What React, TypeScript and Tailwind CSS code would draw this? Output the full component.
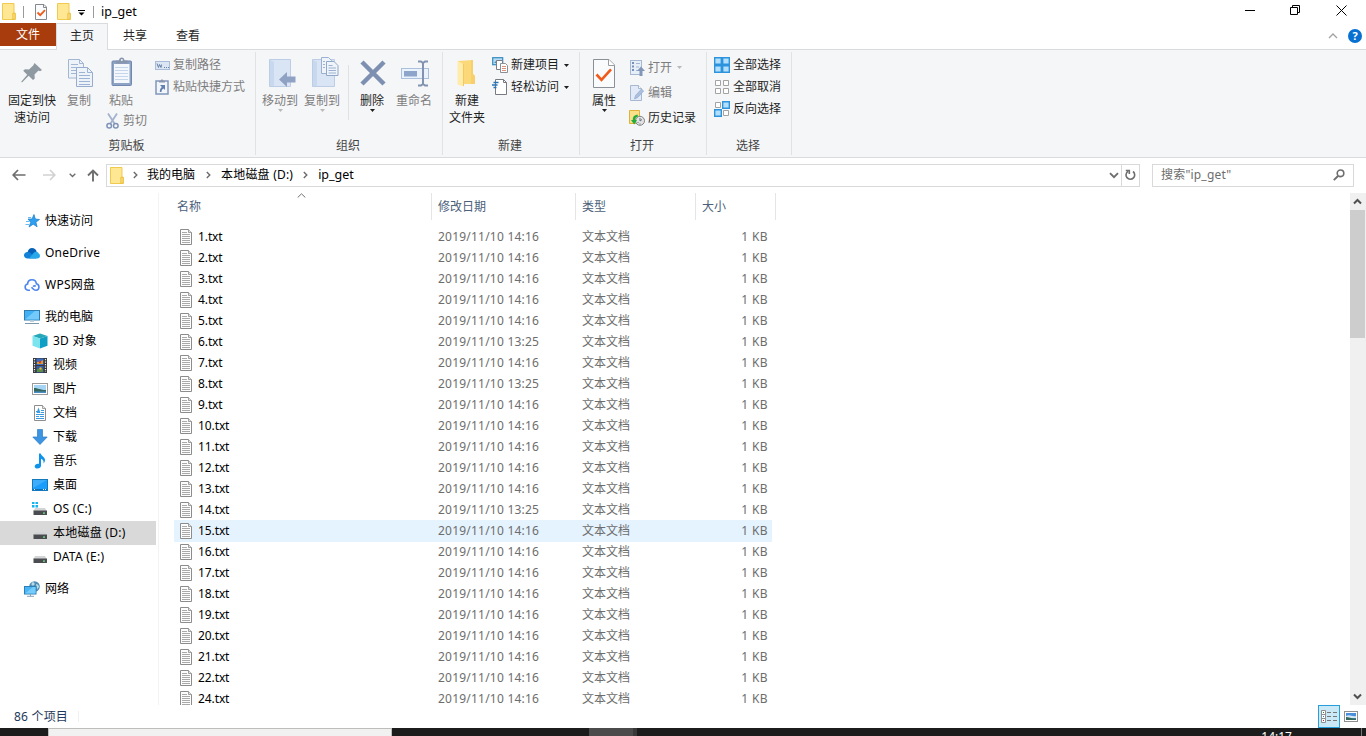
import type { ReactNode } from "react"

interface FileRow {
  name: string
  date: string
}

interface NavItem {
  label: string
  icon: ReactNode
  child?: boolean
  active?: boolean
}

const OLDER = [6, 8, 14]

const files: FileRow[] = [
  1, 2, 3, 4, 5, 6, 7, 8, 9, 10, 11, 12, 13, 14, 15, 16, 17, 18, 19, 20, 21, 22, 24,
].map((n) => ({
  name: `${n}.txt`,
  date: OLDER.includes(n) ? "2019/11/10 13:25" : "2019/11/10 14:16",
}))

/* ---------- small icons ---------- */

function FolderIcon({ className = "" }: { className?: string }) {
  return (
    <svg width="14" height="17" viewBox="0 0 14 17" className={className}>
      <path d="M.5.5H12v9.8h1.2v6.2H.5z" fill="#ffe794" stroke="#f0c94f" />
      <path d="M10.8 16.3v-6h2.4v6z" fill="#fbdc78" stroke="#e9bb36" strokeWidth=".8" />
    </svg>
  )
}

function Caret({ className = "text-[#1e1e1e]" }: { className?: string }) {
  return (
    <svg width="5" height="3" viewBox="0 0 5 3" className={className}>
      <path d="M0 0h5L2.500 3z" fill="currentColor" />
    </svg>
  )
}

function Crumb() {
  return (
    <svg width="5" height="8" viewBox="0 0 5 8">
      <path d="M.8 1l3 3-3 3" fill="none" stroke="#6b6b6b" strokeWidth="1.400" />
    </svg>
  )
}

function Drive({ windows = false }: { windows?: boolean }) {
  return (
    <svg width="16" height="16" viewBox="0 0 16 16">
      <path d="M3 7h10l2 3.500H1.500z" fill="#d3d4d6" />
      <rect x="1.500" y="9.500" width="13.500" height="4.500" rx=".6" fill="#4a4c4f" />
      <path d="M1.500 9.500H15" stroke="#8f9194" strokeWidth=".8" />
      <rect x="11" y="11.500" width="2" height="1.200" fill="#6ff08a" />
      {windows && (
        <g>
          <rect x="0" y="0" width="7" height="7" fill="#fff" />
          <path d="M0 1h2.500v2H0zM3.500 1H6v2H3.500zM0 4h2.500v2.500H0zM3.500 4H6v2.500H3.500z" fill="#12b4f0" />
        </g>
      )}
    </svg>
  )
}

function TextFileIcon() {
  return (
    <svg width="12" height="16" viewBox="0 0 12 16" className="mb-px">
      <path d="M.5.5h8l3 3v12H.5z" fill="#fdfdfd" stroke="#8c8c8c" />
      <path d="M8.500.5v3h3" fill="#e4e4e4" stroke="#8c8c8c" strokeWidth=".8" />
      <path d="M2 3.500h5M2 5.500h8M2 7.500h8M2 9.500h8M2 11.500h8M2 13.500h8" stroke="#a9a9a9" />
    </svg>
  )
}

function Monitor() {
  return (
    <svg width="16" height="16" viewBox="0 0 16 16">
      <rect x=".5" y="1.500" width="15" height="9.500" fill="#42b0f5" stroke="#2f7caf" />
      <path d="M1 10.500L11 2h4v8.500z" fill="#74cbfb" />
      <path d="M6 11.500h4v1.500H6z" fill="#c6d3dc" />
      <path d="M1 14.500h14" stroke="#7c98ad" />
    </svg>
  )
}

const navItems: NavItem[] = [
  {
    label: "快速访问",
    icon: (
      <svg width="16" height="16" viewBox="0 0 16 16">
        <path d="M10 1.500l1.300 4.500 4.200.5-3.600 2.700 1.200 4.600-3.900-2.600-4.200 2.800 1.700-4.700L4 6h4z" fill="#2e9ff0" stroke="#1a7dc9" strokeWidth=".7" />
        <path d="M4 4.500h3M2 8.500h3.500M1.500 11.500h3.500" stroke="#62bdf5" />
      </svg>
    ),
  },
  {
    label: "OneDrive",
    icon: (
      <svg width="16" height="16" viewBox="0 0 16 16">
        <path d="M3.500 7.500C4 4.300 6 3 8 3c2.300 0 4 1.300 4.600 3.500L9 12z" fill="#0861b8" />
        <path d="M3.500 13.500C1.400 13.500 0 12 0 10.300 0 8.400 1.600 7 3.500 7c1.300 0 2 .4 3 1l6 5.500z" fill="#1281d8" />
        <path d="M5 13.500l5-6c1-.9 4-1.300 4.700 1 1 .6 1.300 1.500 1.300 2.500 0 1.500-1 2.500-2.600 2.500z" fill="#28a8ea" />
      </svg>
    ),
  },
  {
    label: "WPS网盘",
    icon: (
      <svg width="16" height="16" viewBox="0 0 16 16">
        <path d="M6 13.300H4A3.200 3.200 0 0 1 3.600 7C3.700 4.300 5.400 2.700 8 2.700s4.200 1.700 4.400 4.100A3.300 3.300 0 0 1 12 13.300c-1.500 0-2.400-.8-3.300-1.800L7.500 10.200M9 9.500c1-.8 2-.8 2.800-.3" fill="none" stroke="#4a86ee" strokeWidth="1.600" />
      </svg>
    ),
  },
  { label: "我的电脑", icon: <Monitor /> },
  {
    label: "3D 对象",
    child: true,
    icon: (
      <svg width="16" height="16" viewBox="0 0 16 16">
        <path d="M8 .5L15.500 3 8 5.500.5 3z" fill="#27a8b8" />
        <path d="M.5 3L8 5.500v10L.5 12.800z" fill="#7ce4ee" />
        <path d="M15.500 3L8 5.500v10l7.500-2.700z" fill="#109fc4" />
      </svg>
    ),
  },
  {
    label: "视频",
    child: true,
    icon: (
      <svg width="16" height="16" viewBox="0 0 16 16">
        <rect x="1" y="1" width="14" height="15" fill="#37383c" />
        <path d="M2.500 2v13M13.500 2v13" stroke="#f1f1f1" strokeWidth="1.200" strokeDasharray="1.300 1.200" />
        <rect x="4.500" y="1.500" width="7" height="6.500" fill="#3c6fc4" />
        <rect x="4.500" y="9" width="7" height="6.500" fill="#365ea8" />
        <path d="M5 5h3l3-2v4H5z" fill="#df9b35" />
        <path d="M5 12h6v3H5z" fill="#5c8d46" />
        <circle cx="8" cy="5" r="1.200" fill="#d33c31" />
        <circle cx="8.500" cy="11.500" r="1.200" fill="#e2b62e" />
      </svg>
    ),
  },
  {
    label: "图片",
    child: true,
    icon: (
      <svg width="16" height="16" viewBox="0 0 16 16">
        <rect x=".5" y="2.500" width="15" height="11" fill="#fff" stroke="#9a9a9a" />
        <rect x="2" y="4" width="12" height="8" fill="#a6d4f5" />
        <path d="M2 7c4 0 6 2 12 2v3H2z" fill="#36675c" />
        <path d="M2 10.500h12V12H2z" fill="#4a8ec6" />
      </svg>
    ),
  },
  {
    label: "文档",
    child: true,
    icon: (
      <svg width="16" height="16" viewBox="0 0 16 16">
        <path d="M2.500.5h8l3 3v12h-11z" fill="#fff" stroke="#8d8d8d" />
        <path d="M10.500.5v3h3" fill="#e7e7e7" stroke="#8d8d8d" strokeWidth=".8" />
        <path d="M4 6.500h2M9 5.500h3M9 7.500h3M4 9.500h8M4 11.500h3M8 11.500h4M4 13.500h8" stroke="#3a9be0" />
        <path d="M4.500 8l2-5.500L8.500 8z" fill="#3a9be0" />
      </svg>
    ),
  },
  {
    label: "下载",
    child: true,
    icon: (
      <svg width="16" height="16" viewBox="0 0 16 16">
        <path d="M5.500.5h5v7.500h4.700L8 15.500.8 8h4.700z" fill="#3c94e2" stroke="#2d7bc2" strokeWidth=".7" />
      </svg>
    ),
  },
  {
    label: "音乐",
    child: true,
    icon: (
      <svg width="16" height="16" viewBox="0 0 16 16">
        <path d="M7 .5h1.700c.3 2.300 4.300 3.300 4.300 6.500 0 1.500-.7 2.700-1.500 3.500.5-2.500-.5-4-2.500-4.700v7c0 1.600-1.500 2.700-3.500 2.700-1.700 0-2.800-.9-2.800-2.100 0-1.500 1.500-2.700 3.300-2.700H7z" fill="#0d93ea" />
      </svg>
    ),
  },
  {
    label: "桌面",
    child: true,
    icon: (
      <svg width="16" height="16" viewBox="0 0 16 16">
        <rect x=".5" y="2.500" width="15" height="11" fill="#1a9dfb" stroke="#1679bd" />
        <path d="M1 3h14L1 11z" fill="#3eaefc" />
        <path d="M1 12.500h14" stroke="#0b6eb9" />
        <path d="M2 12.500h1M11 12.500h1M13 12.500h1" stroke="#e5f5ff" />
      </svg>
    ),
  },
  { label: "OS (C:)", child: true, icon: <Drive windows /> },
  { label: "本地磁盘 (D:)", child: true, active: true, icon: <Drive /> },
  { label: "DATA (E:)", child: true, icon: <Drive /> },
  {
    label: "网络",
    icon: (
      <svg width="16" height="16" viewBox="0 0 16 16">
        <circle cx="10.500" cy="5.500" r="5.300" fill="#4f8db3" />
        <path d="M8 1.500c2-1 3 .5 2.500 2S7 5 7.500 3zM12 3c2 0 3 2 3 3l-2 2.500z" fill="#b9dcec" />
        <rect x=".5" y="5.500" width="11.500" height="7.500" fill="#4ab4f5" stroke="#2b80b5" />
        <path d="M1 12.500L9 6h2.500v6.500z" fill="#75ccfb" />
        <path d="M3 15.300h7M6.500 13v2" stroke="#86a3b5" />
      </svg>
    ),
  },
]

/* ---------- ribbon ---------- */

interface BigButtonProps {
  icon: ReactNode
  lines: string[]
  className: string
  disabled?: boolean
  caret?: boolean
}

function BigButton({ icon, lines, className, disabled, caret }: BigButtonProps) {
  return (
    <div className={`flex shrink-0 flex-col items-center pt-[2px] ${disabled ? "text-[#7d7d7d]" : "text-[#1e1e1e]"} ${className}`}>
      <div className="flex h-[34px] items-center justify-center">{icon}</div>
      <div className="mt-[2px] text-center leading-[17px] whitespace-nowrap">
        {lines.map((line) => (
          <div key={line}>{line}</div>
        ))}
      </div>
      {caret && <Caret className={disabled ? "text-[#b9b9b9]" : "text-[#1e1e1e]"} />}
    </div>
  )
}

interface SmallButtonProps {
  icon: ReactNode
  label: string
  disabled?: boolean
  caret?: boolean
  className?: string
}

function SmallButton({ icon, label, disabled, caret, className = "h-[22px]" }: SmallButtonProps) {
  return (
    <div className={`flex items-center whitespace-nowrap ${disabled ? "text-[#7d7d7d]" : "text-[#1e1e1e]"} ${className}`}>
      <span className="mr-[3px] flex w-4 justify-center">{icon}</span>
      {label}
      {caret && <span className="ml-[5px]"><Caret className={disabled ? "text-[#b9b9b9]" : "text-[#1e1e1e]"} /></span>}
    </div>
  )
}

function Group({ title, className, children }: { title: string; className: string; children: ReactNode }) {
  return (
    <div className={`mt-[2px] flex h-[103px] shrink-0 flex-col border-r border-[#e0e2e4] ${className}`}>
      <div className="flex h-[84px] pt-[2px]">{children}</div>
      <div className="pr-[2px] text-center leading-[19px] text-[#444]">{title}</div>
    </div>
  )
}

function Ribbon() {
  return (
    <div className="flex h-[108px] border-b border-[#dadbdc] bg-[#f5f6f8]">
      <Group title="剪贴板" className="w-64">
        <BigButton
          className="ml-2 w-12"
          lines={["固定到快", "速访问"]}
          icon={
            <svg width="22" height="22" viewBox="0 0 22 22">
              <path d="M13.500 1l7.500 7-2 1.200-1.500-.6-4 4 .3 3.900-1.800 1.500-4.300-4.300L1 20.500l-.8-.7 6-7-4-4 1.800-1.600 4 .2 4.200-4z" fill="#8f99a2" />
            </svg>
          }
        />
        <BigButton
          className="ml-[5px] w-9"
          disabled
          lines={["复制"]}
          icon={
            <svg width="25" height="28" viewBox="0 0 25 28" className="ml-[2px]">
              <path d="M.5.500h11l4 4V19H.500z" fill="#eef3f9" stroke="#a3b6d2" />
              <path d="M11.500.500v4h4M3 5.500h7M3 8.500h9M3 11.500h5M3 14.500h5" fill="none" stroke="#a3b6d2" />
              <path d="M8.500 8.500h11l5 5v14h-16z" fill="#eef3f9" stroke="#98adcd" />
              <path d="M19.500 8.500v5h5M11 13.500h6M11 16.500h11M11 19.500h11M11 22.500h11M11 25.500h11" fill="none" stroke="#9db3d3" />
            </svg>
          }
        />
        <div className="ml-[5px] w-[45px]">
          <BigButton
            className="w-[38px]"
            disabled
            lines={["粘贴"]}
            icon={
              <svg width="22" height="30" viewBox="0 0 22 30" className="mb-[2px] ml-[2px]">
                <rect x="1" y="4" width="19.500" height="24.500" rx="1" fill="#8da2c4" stroke="#7188af" />
                <rect x="3" y="7" width="15.500" height="19" fill="#f4f8fc" />
                <path d="M4 10.500h13M4 13.500h13M4 16.500h13M4 19.500h13M4 22.500h13" stroke="#c5d6ea" />
                <path d="M5 6.500V3.500h3c0-4 5.500-4 5.500 0h3v3z" fill="#8795ad" />
                <circle cx="10.800" cy="3" r="1" fill="#eef3f8" />
              </svg>
            }
          />
          <SmallButton
            disabled
            label="剪切"
            className="mt-[2px] ml-1 h-5"
            icon={
              <svg width="13" height="16" viewBox="0 0 13 16">
                <path d="M2 .5l6.500 10M11 .5L4.500 10.500" stroke="#a3b2cd" strokeWidth="1.800" />
                <circle cx="3.200" cy="12.800" r="2.300" fill="none" stroke="#7f93b6" strokeWidth="1.500" />
                <circle cx="9.800" cy="12.800" r="2.300" fill="none" stroke="#7f93b6" strokeWidth="1.500" />
              </svg>
            }
          />
        </div>
        <div className="ml-[7px]">
          <SmallButton
            disabled
            label="复制路径"
            icon={
              <svg width="15" height="9" viewBox="0 0 15 9">
                <rect x=".5" y=".5" width="14" height="8" fill="#dce6f3" stroke="#a9bdd8" />
                <path d="M2 2.500l1.500 4 1-3 1.500 3 .5-3M9 6.500h1M11 6.500h1M13 6.500h1" fill="none" stroke="#6680ad" />
              </svg>
            }
          />
          <SmallButton
            disabled
            label="粘贴快捷方式"
            icon={
              <svg width="14" height="16" viewBox="0 0 14 16">
                <rect x="1" y="2" width="12" height="13" fill="#f2f6fb" stroke="#8196ba" strokeWidth="1.500" />
                <path d="M4 3.500V2h1.500c0-2 3-2 3 0H10v1.500z" fill="#8795ad" />
                <path d="M5 6h5v5L8.500 9.500c-1.500 1-2 2-2 3.500H4.800c0-2.500.7-3.700 2-5z" fill="#6280b0" />
              </svg>
            }
          />
        </div>
      </Group>

      <Group title="组织" className="w-[187px]">
        <BigButton
          className="ml-[3px] w-[42px]"
          disabled
          caret
          lines={["移动到"]}
          icon={
            <svg width="27" height="30" viewBox="0 0 27 30" className="ml-[5px]">
              <path d="M.5 1.500h21v27H.500z" fill="#d9e5f5" stroke="#bccde5" />
              <path d="M1 2l4 2v24H1z" fill="#c8d8ee" />
              <path d="M10 21.500l8-7.500v4.500h8.500v6H18V29z" fill="#8fa2c3" />
            </svg>
          }
        />
        <BigButton
          className="w-[42px]"
          disabled
          caret
          lines={["复制到"]}
          icon={
            <svg width="27" height="31" viewBox="0 0 27 31" className="mb-px ml-[7px]">
              <path d="M.5 2.500h22v27H.500z" fill="#d9e5f5" stroke="#bccde5" />
              <path d="M1 3l4 2v24H1z" fill="#c8d8ee" />
              <path d="M9.500.5h7l3 3v13h-10z" fill="#eff4fa" stroke="#9cb1cf" />
              <path d="M14.500 4.500h7.500l4 4v10H14.500z" fill="#eff4fa" stroke="#91a8ca" />
              <path d="M11 4.500h2M11 7.500h2M11 10.500h2M16.500 8.500h4M16.500 11h7.500M16.500 13.500h7.500M16.500 16h7.500" stroke="#9db2d1" />
            </svg>
          }
        />
        <div className="mt-[11px] ml-[5px] h-[55px] w-px bg-[#dfe1e3]" />
        <BigButton
          className="ml-[3px] w-10"
          caret
          lines={["删除"]}
          icon={
            <svg width="26" height="26" viewBox="0 0 26 26" className="ml-[2px]">
              <path d="M2 2l22 22M24 2L2 24" stroke="#7d90b2" strokeWidth="4.500" />
            </svg>
          }
        />
        <BigButton
          className="ml-px w-[42px]"
          disabled
          lines={["重命名"]}
          icon={
            <svg width="28" height="27" viewBox="0 0 28 27" className="ml-[2px]">
              <rect x=".5" y="8.500" width="27" height="10" fill="#eaf2fb" stroke="#abc0dc" />
              <rect x="3" y="11" width="13" height="5.500" fill="#8ea5cb" />
              <path d="M22 2v23M17 1.500h3l2 1.500 2-1.500h3M17 25.500h3l2-1.500 2 1.500h3" fill="none" stroke="#8293b0" strokeWidth="2" />
            </svg>
          }
        />
      </Group>

      <Group title="新建" className="w-[137px]">
        <BigButton
          className="ml-1 w-10"
          lines={["新建", "文件夹"]}
          icon={
            <svg width="19" height="28" viewBox="0 0 19 28" className="mr-px">
              <path d="M1 2l15-1v14l2 2v8H6z" fill="#fbd878" />
              <path d="M.500 2l6 3v22.500l-6-2z" fill="#ffecab" />
              <path d="M6.500 5v22" stroke="#f2ca62" />
              <path d="M14 1h2v14l2 2v8h-4z" fill="#f7cf6b" />
            </svg>
          }
        />
        <div className="ml-[5px]">
          <SmallButton
            caret
            label="新建项目"
            icon={
              <svg width="16" height="16" viewBox="0 0 16 16">
                <rect x=".7" y=".7" width="10" height="7" fill="#b6dcf5" stroke="#378abe" strokeWidth="1.200" />
                <path d="M2 6l3-3 3 3z" fill="#4792aa" />
                <path d="M4.500 3.500h6v9h-6z" fill="#fff" stroke="#7b7f85" />
                <path d="M8.500 6.500h5l2 2v7h-7z" fill="#fff" stroke="#8b8f96" />
                <path d="M10 9.500h4M10 11.500h4M10 13.500h4" stroke="#dc927a" />
              </svg>
            }
          />
          <SmallButton
            caret
            label="轻松访问"
            icon={
              <svg width="16" height="16" viewBox="0 0 16 16">
                <path d="M3.500.5h8l3 3v12h-11z" fill="#fff" stroke="#777b80" />
                <path d="M11.500.5v3h3" fill="none" stroke="#777b80" />
                <path d="M1.500 3.500h5M0 6h5.500M1.500 8.500h3" stroke="#2374b8" strokeWidth="1.300" />
              </svg>
            }
          />
        </div>
      </Group>

      <Group title="打开" className="w-[127px]">
        <BigButton
          className="ml-1 w-10"
          caret
          lines={["属性"]}
          icon={
            <svg width="22" height="29" viewBox="0 0 22 29">
              <path d="M.5.5h15.500l5.500 5.500v22.500H.5z" fill="#fafbfc" stroke="#8b8f96" />
              <path d="M15.500 .5v6h6" fill="#fff" stroke="#9a9da3" />
              <path d="M3.500 15.500l5 5.300 9.500-10.500" fill="none" stroke="#f05a1a" strokeWidth="2.600" />
            </svg>
          }
        />
        <div className="ml-[5px] pt-px">
          <SmallButton
            disabled
            caret
            label="打开"
            className="h-[25px]"
            icon={
              <svg width="15" height="16" viewBox="0 0 15 16">
                <rect x=".5" y=".5" width="11" height="14" fill="#e6eef7" stroke="#a7b8d1" />
                <path d="M2 3h2M2 6.500h2M2 10h2" stroke="#7690b9" strokeWidth="2" />
                <path d="M6 3.500h4M6 7h3M6 10.500h2" stroke="#a5b7d2" />
                <path d="M11 6.500l4 4.500h-2.500v5h-3v-5H7z" fill="#8296b8" />
              </svg>
            }
          />
          <SmallButton
            disabled
            label="编辑"
            className="h-[25px]"
            icon={
              <svg width="14" height="16" viewBox="0 0 14 16">
                <path d="M.5.5h8l3 3v12H.500z" fill="#e1eaf6" stroke="#a7b8d1" />
                <path d="M8.500.5v3h3" fill="#fff" stroke="#a7b8d1" />
                <path d="M4.500 14l1-3.500 6-6.500 2.200 2-6 6.500z" fill="#abc0df" stroke="#8da4c8" strokeWidth=".6" />
              </svg>
            }
          />
          <SmallButton
            label="历史记录"
            className="h-[25px]"
            icon={
              <svg width="16" height="16" viewBox="0 0 16 16">
                <path d="M.5.5h10v13H.500z" fill="#fbe08a" stroke="#e0b23c" />
                <circle cx="11" cy="10.800" r="4.500" fill="#e2e3e4" stroke="#808388" />
                <path d="M11 8v3l2-1.500M8.500 12.500h1M11 13.500v1" stroke="#6d7074" fill="none" />
                <path d="M8.500 4.500C5 5 3.500 7 3.800 10H2l3.200 4.500L8 10H6.200C6 8 7 7 9 6.500z" fill="#23ad3b" />
              </svg>
            }
          />
        </div>
      </Group>

      <Group title="选择" className="w-[85px]">
        <div className="ml-[7px]">
          <SmallButton
            label="全部选择"
            icon={
              <svg width="16" height="16" viewBox="0 0 16 16">
                <path d="M.7.7h6.600v6.600H.700zM8.700.7h6.600v6.600H8.700zM.7 8.700h6.600v6.600H.700zM8.700 8.700h6.600v6.600H8.700z" fill="#b3dffc" stroke="#2d93dc" strokeWidth="1.400" />
              </svg>
            }
          />
          <SmallButton
            label="全部取消"
            icon={
              <svg width="16" height="16" viewBox="0 0 16 16">
                <path d="M1.500 1.500h5v5h-5zM9.500 1.500h5v5h-5zM1.500 9.500h5v5h-5zM9.500 9.500h5v5h-5z" fill="#fff" stroke="#a3a3a3" />
              </svg>
            }
          />
          <SmallButton
            label="反向选择"
            icon={
              <svg width="16" height="16" viewBox="0 0 16 16">
                <path d="M1.500 1.500h5v5h-5zM9.500 9.500h5v5h-5z" fill="#fff" stroke="#a3a3a3" />
                <path d="M8.700.7h6.600v6.600H8.700zM.7 8.700h6.600v6.600H.700z" fill="#b3dffc" stroke="#2d93dc" strokeWidth="1.400" />
              </svg>
            }
          />
        </div>
      </Group>
    </div>
  )
}

/* ---------- window chrome ---------- */

function TitleBar() {
  return (
    <div className="flex h-[23px] items-center pl-[2px]">
      <FolderIcon />
      <div className="ml-[7px] h-3 w-px bg-[#9a9a9a]" />
      <svg width="12" height="16" viewBox="0 0 12 16" className="ml-[11px]">
        <path d="M.5.5h8.500l2.500 2.500v12.500H.5z" fill="#fafbfc" stroke="#85898f" />
        <path d="M8.500.5v3h3" fill="none" stroke="#85898f" />
        <path d="M2.500 8.500l2.700 2.700 4.800-5" fill="none" stroke="#f05a1a" strokeWidth="1.800" />
      </svg>
      <FolderIcon className="ml-[10px]" />
      <svg width="7" height="6" viewBox="0 0 7 6" className="mt-[3px] ml-[7px]">
        <path d="M0 .5h7" stroke="#000" />
        <path d="M.5 2.500h6L3.500 5.500z" />
      </svg>
      <div className="ml-2 h-3 w-px bg-[#9a9a9a]" />
      <span className="ml-[7px] text-[12.5px]">ip_get</span>
      <div className="mr-[19px] mb-[2px] ml-auto flex items-center gap-[35px]">
        <svg width="11" height="11" viewBox="0 0 11 11"><path d="M1 5.500h10" stroke="#000" /></svg>
        <svg width="11" height="11" viewBox="0 0 11 11">
          <path d="M.5 2.500h7v7h-7zM2.500 2.500v-2h7v7h-2" fill="none" stroke="#000" />
        </svg>
        <svg width="11" height="11" viewBox="0 0 11 11"><path d="M.5.500l10 10M10.500.500l-10 10" stroke="#000" /></svg>
      </div>
    </div>
  )
}

function Tabs() {
  return (
    <div className="flex h-[27px] border-b border-[#dadbdc] text-[#262626]">
      <div className="h-[23px] w-14 bg-[#a83c0c] text-center leading-[24px] text-white">文件</div>
      <div className="h-[27px] w-[52px] border border-b-0 border-[#dadbdc] bg-[#f5f6f8] text-center leading-6">主页</div>
      <div className="w-[54px] text-center leading-[25px]">共享</div>
      <div className="w-[52px] text-center leading-[25px]">查看</div>
      <div className="mr-1 ml-auto flex items-center gap-[10px]">
        <svg width="10" height="6" viewBox="0 0 10 6"><path d="M1 5l4-4 4 4" fill="none" stroke="#a2a2a2" strokeWidth="1.300" /></svg>
        <div className="h-[14px] w-[14px] rounded-full bg-[#0870d1] text-center text-[11px] leading-[14px] font-bold text-white">?</div>
      </div>
    </div>
  )
}

function AddressBar() {
  return (
    <div className="flex h-[35px] items-center pb-[1px] text-black">
      <svg width="14" height="12" viewBox="0 0 14 12" className="ml-3">
        <path d="M13.500 6h-12M6 1L1.200 6 6 11" fill="none" stroke="#6e6e6e" strokeWidth="1.700" />
      </svg>
      <svg width="14" height="12" viewBox="0 0 14 12" className="ml-4">
        <path d="M1 6h11.500M8 1l4.800 5L8 11" fill="none" stroke="#d2d2d2" strokeWidth="1.700" />
      </svg>
      <svg width="7" height="5" viewBox="0 0 7 5" className="ml-[13px]">
        <path d="M.7.800l2.800 2.800L6.300.8" fill="none" stroke="#6e6e6e" strokeWidth="1.400" />
      </svg>
      <svg width="12" height="13" viewBox="0 0 12 13" className="ml-[11px]">
        <path d="M6 12.500V1.500M1 6.500l5-5 5 5" fill="none" stroke="#6e6e6e" strokeWidth="1.900" />
      </svg>
      <div className="ml-[7px] flex h-[23px] w-[1034px] items-center border border-[#d9d9d9]">
        <FolderIcon className="ml-[3px]" />
        <span className="ml-[9px]"><Crumb /></span>
        <span className="ml-[9px]">我的电脑</span>
        <span className="ml-[11px]"><Crumb /></span>
        <span className="ml-[10px] tracking-[0.2px]">本地磁盘 (D:)</span>
        <span className="ml-[10px]"><Crumb /></span>
        <span className="ml-[10px] text-[12.5px]">ip_get</span>
        <svg width="10" height="7" viewBox="0 0 10 7" className="mr-[2px] ml-auto">
          <path d="M1 1.200l4 4 4-4" fill="none" stroke="#6e6e6e" strokeWidth="1.900" />
        </svg>
        <div className="flex h-full w-[18px] items-center justify-center border-l border-[#d9d9d9]">
          <svg width="11" height="12" viewBox="0 0 11 12">
            <path d="M3 2.300A4.300 4.300 0 1 0 8 2.500M.8 1.500h3.500V5" fill="none" stroke="#6e6e6e" strokeWidth="1.600" />
          </svg>
        </div>
      </div>
      <div className="ml-3 flex h-[23px] w-[202px] items-center justify-between border border-[#d9d9d9] pr-2 pl-2 text-[#6d6d6d]">
        <span className="tracking-[0.2px]">搜索"ip_get"</span>
        <svg width="12" height="12" viewBox="0 0 12 12">
          <circle cx="7.500" cy="4.300" r="3.300" fill="none" stroke="#6e6e6e" strokeWidth="1.600" />
          <path d="M5 7L.8 11.200" stroke="#6e6e6e" strokeWidth="1.900" />
        </svg>
      </div>
    </div>
  )
}

function Sidebar() {
  return (
    <div className="w-[159px] shrink-0 border-r border-[#f3f3f3] pt-2 text-black">
      {navItems.map((item) => (
        <div
          key={item.label}
          className={`mr-[2px] flex h-6 items-center whitespace-nowrap ${item.child ? "pl-8" : "mt-2 pl-6"} ${item.active ? "bg-[#d9d9d9]" : ""}`}
        >
          {item.icon}
          <span className={`ml-[5px] ${/[A-Z]/.test(item.label) ? "tracking-[0.25px]" : ""}`}>{item.label}</span>
        </div>
      ))}
    </div>
  )
}

function FileList() {
  return (
    <div className="grow overflow-hidden pl-[15px]">
      <div className="relative flex h-[27px] text-[#4c607a]">
        <div className="w-[258px] border-r border-[#e5e5e5] pl-[3px] leading-7">名称</div>
        <div className="w-36 border-r border-[#e5e5e5] pl-[6px] leading-7">修改日期</div>
        <div className="w-[120px] border-r border-[#e5e5e5] pl-[6px] leading-7">类型</div>
        <div className="w-20 border-r border-[#e5e5e5] pl-[6px] leading-7">大小</div>
        {/* ascending sort marker sits over the name column */}
        <svg width="9" height="5" viewBox="0 0 9 5" className="absolute top-0 left-[123px]">
          <path d="M.7 4.500l3.800-3.700 3.800 3.700" fill="none" stroke="#6f6f6f" />
        </svg>
      </div>
      <div className="mt-[6px]">
        {files.map((file) => (
          <div
            key={file.name}
            className={`-mb-px flex h-[22px] w-[598px] items-center text-[#6d6d6d] ${file.name === "15.txt" ? "bg-[#e5f3ff]" : ""}`}
          >
            <div className="flex w-[264px] items-center pl-[6px] text-black">
              <TextFileIcon />
              <span className="ml-[6px] tracking-[-0.1px]">{file.name}</span>
            </div>
            <div className="w-36 tracking-[0.22px]">{file.date}</div>
            <div className="w-[120px]">文本文档</div>
            <div className="grow pr-1 text-right tracking-[0.4px]">1 KB</div>
          </div>
        ))}
      </div>
    </div>
  )
}

function ScrollBar() {
  return (
    <div className="flex w-4 shrink-0 flex-col items-center bg-[#f0f0f0] pr-px">
      <div className="flex h-[17px] items-center">
        <svg width="9" height="7" viewBox="0 0 9 7"><path d="M1 5.500L4.500 2 8 5.500" fill="none" stroke="#505050" strokeWidth="2" /></svg>
      </div>
      <div className="h-32 w-[15px] bg-[#cdcdcd]" />
      <div className="mt-auto flex h-[17px] items-center">
        <svg width="9" height="7" viewBox="0 0 9 7"><path d="M1 1.500L4.500 5 8 1.500" fill="none" stroke="#505050" strokeWidth="2" /></svg>
      </div>
    </div>
  )
}

function StatusBar() {
  return (
    <div className="flex h-[23px] items-center pl-[14px] text-[#1e395b]">
      <span className="tracking-[0.2px]">86 个项目</span>
      <div className="ml-[10px] h-[11px] w-px bg-[#f0f0f0]" />
      <div className="ml-auto flex h-[23px] w-[22px] items-center justify-center border border-[#26a0da] bg-[#cbe8f6]">
        <svg width="16" height="13" viewBox="0 0 16 13">
          <path d="M.5.500h4v4h-4zM.5 4.500h4v4h-4zM.5 8.500h4v4h-4z" fill="#fff" stroke="#8f8f8f" />
          <path d="M6 2.500h4M12 2.500h4M6 6.500h4M12 6.500h4M6 10.500h4M12 10.500h4" stroke="#777" />
          <path d="M2 2.500h1" stroke="#3a7c45" />
          <path d="M2 6.500h1" stroke="#2f77d0" />
          <path d="M2 10.500h1" stroke="#c22" />
        </svg>
      </div>
      <svg width="14" height="11" viewBox="0 0 14 11" className="mr-2 ml-1">
        <rect x=".5" y=".5" width="13" height="10" fill="#fff" stroke="#8f8f8f" />
        <rect x="2" y="2" width="10" height="7" fill="#4b8edb" />
        <path d="M2 5c4-2 6 1 10 0v2H2z" fill="#d5e8f4" />
        <path d="M2 6c3 0 6 2 10 1.500V9H2z" fill="#376a5b" />
      </svg>
    </div>
  )
}

function TaskBar() {
  return (
    <div className="flex h-2 overflow-hidden bg-[#1c1c1c] pl-12">
      <div className="w-[344px] border border-b-0 border-[#bdbdba] bg-[#f1f1f1]" />
      <div className="ml-[197px] w-11 bg-[#4b4b4b]" />
      <div className="w-1 bg-[#393939]" />
      <span className="mt-[3px] ml-auto text-[12px] leading-3 text-white">14:17</span>
      <div className="mr-1 ml-[69px] w-px bg-[#777]" />
    </div>
  )
}

function App() {
  return (
    <div className="flex h-[736px] w-[1366px] flex-col overflow-hidden bg-white font-['Noto_Sans','Noto_Sans_CJK_SC',sans-serif] text-[12px] leading-4">
      <TitleBar />
      <Tabs />
      <Ribbon />
      <AddressBar />
      <div className="flex h-[512px] overflow-hidden">
        <Sidebar />
        <FileList />
        <ScrollBar />
      </div>
      <StatusBar />
      <TaskBar />
    </div>
  )
}

export default App
